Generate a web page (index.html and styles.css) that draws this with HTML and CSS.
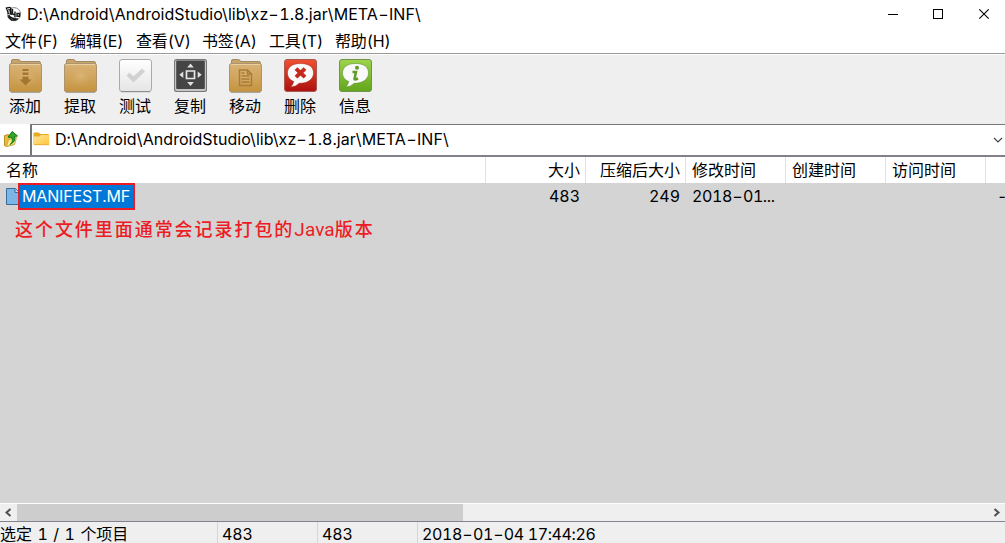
FILE: index.html
```html
<!DOCTYPE html>
<html lang="zh-CN">
<head>
<meta charset="utf-8">
<title>META-INF</title>
<link rel="stylesheet" href="styles.css">
</head>
<body>
<div class="window">
  <header class="titlebar">
    <svg class="app-icon" width="17" height="16" viewBox="0 0 17 16">
      <circle cx="9" cy="8.2" r="6.6" fill="#fff" stroke="#888" stroke-width="1"/>
      <path d="M.5 1.5 5 .8 6.5 2 7 9 3 8z" fill="#111"/>
      <path d="M2 3.2l3-.7M3.8 4l.6 3.6" fill="none" stroke="#fff"/>
      <path d="M7.5 3v5l2.5 1M10 5.5v6M12 11V7.5h2.5v2.8H12M3.5 9q3 4.5 9.5 4M3 10.5l3.5 3.5h5" fill="none" stroke="#1c1c1c" stroke-width="1.4"/>
    </svg>
    <span class="path title-path">D:\Android\AndroidStudio\lib\xz<i class="dash">-</i>1.8.jar\META<i class="dash">-</i>INF\</span>
    <svg class="controls" width="104" height="12" viewBox="0 0 104 12" fill="none" stroke="#000">
      <path d="M0 6.5h10M45.5 1.5h9v9h-9z" shape-rendering="crispEdges"/>
      <path d="M91.3 1.3l9.4 9.4M100.7 1.3l-9.4 9.4" stroke-width="1.1"/>
    </svg>
  </header>
  <nav class="menubar">
    <span class="m-file">文件(F)</span><span class="m-edit">编辑(E)</span><span class="m-view">查看(V)</span><span class="m-book">书签(A)</span><span class="m-tool">工具(T)</span><span class="m-help">帮助(H)</span>
  </nav>
  <svg width="0" height="0" class="defs">
    <defs>
      <linearGradient id="fold" x2="0" y2="1"><stop stop-color="#d9b378"/><stop offset="1" stop-color="#c4933e"/></linearGradient>
      <radialGradient id="glow"><stop stop-color="#dfb980" stop-opacity=".7"/><stop offset="1" stop-color="#d2a35a" stop-opacity="0"/></radialGradient>
      <linearGradient id="paper" x2="0" y2="1"><stop stop-color="#fff"/><stop offset="1" stop-color="#e5e5e5"/></linearGradient>
      <linearGradient id="red" x2="0" y2="1"><stop stop-color="#f05031"/><stop offset="1" stop-color="#ad1010"/></linearGradient>
      <linearGradient id="green" x2="0" y2="1"><stop stop-color="#9dd44b"/><stop offset="1" stop-color="#62a51c"/></linearGradient>
      <linearGradient id="yellow" x2="1" y2="1"><stop stop-color="#ffe599"/><stop offset="1" stop-color="#ffc73b"/></linearGradient>
      <g id="folder">
        <path d="M3.5 5V3q0-1.500 1.500-1.500h5.500q1.500 0 2 2H31q1.500 0 1.500 1.500v3h-29z" fill="#c9a468" stroke="#a08a68"/>
        <rect x="1.500" y="5.500" width="32" height="28.500" rx="2" fill="url(#fold)" stroke="#ad9470"/>
        <path d="M3 6.500h29" stroke="#e9cfa0"/>
        <ellipse cx="17.500" cy="18" rx="15" ry="12" fill="url(#glow)"/>
        <path d="M3 34.500h29" stroke="#999" stroke-opacity=".7"/>
      </g>
    </defs>
  </svg>
  <section class="toolbar">
    <div class="tool"><svg width="35" height="36" viewBox="0 0 35 36"><use href="#folder"/><path d="M14.500 11h6v2h-6zM14.500 14.500h6v2.500h-6zM14.500 18.500h6v3h3l-6 6-6-6h3z" fill="#a47731"/></svg><span>添加</span></div>
    <div class="tool"><svg width="35" height="36" viewBox="0 0 35 36"><use href="#folder"/></svg><span>提取</span></div>
    <div class="tool"><svg width="35" height="36" viewBox="0 0 35 36"><rect x="1.500" y="1.500" width="32" height="32" rx="2.500" fill="url(#paper)" stroke="#aaa"/><path d="M3 33.700h29" stroke="#888"/><path d="M8.500 17.500l3-3 4 4 8.500-8 3 3-11.500 11z" fill="#d1d1d1"/></svg><span>测试</span></div>
    <div class="tool"><svg width="35" height="36" viewBox="0 0 35 36"><rect x="1" y="1" width="33" height="33" rx="2.500" fill="#777"/><rect x="2" y="2" width="31" height="31" rx="2" fill="#c6c6c6"/><rect x="3.200" y="2.500" width="28.600" height="28.500" rx="1" fill="#454545"/><path d="M13.500 13h8v7.500h-8z" fill="none" stroke="#e7e7e7" stroke-width="1.700"/><path d="M14.200 9.500l3.300-4 3.300 4zM14.200 24l3.300 4 3.300-4zM10.300 13.500V20l-4-3.200zM24.700 13.500V20l4-3.200z" fill="#e1e1e1"/></svg><span>复制</span></div>
    <div class="tool"><svg width="35" height="36" viewBox="0 0 35 36"><use href="#folder"/><path d="M11.500 12h8l4 4v11.500h-12zM19.500 12v4h4M13.500 18h8M13.500 21h8M13.500 24h8M13.500 15h3" fill="none" stroke="#a77c36" stroke-width="1.500"/></svg><span>移动</span></div>
    <div class="tool"><svg width="35" height="36" viewBox="0 0 35 36"><rect x="1.500" y="1.500" width="32" height="32" rx="2.500" fill="url(#red)" stroke="#a85a51"/><path d="M17.500 5.500C9 5.500 4.500 9.500 4.500 15c0 4 2.500 7 6.300 8.500Q10 27 7.500 29q5.500-.3 8.500-3.700C25 25.500 30.500 21 30.500 15S26 5.500 17.500 5.500z" fill="#fafafa" stroke="#9b2019" stroke-opacity=".45"/><path d="M13 10.600l9 8.500M22 10.600l-9 8.500" stroke="#c5281d" stroke-width="4"/></svg><span>删除</span></div>
    <div class="tool"><svg width="35" height="36" viewBox="0 0 35 36"><rect x="1.500" y="1.500" width="32" height="32" rx="2.500" fill="url(#green)" stroke="#71934b"/><path d="M17.500 5.500C9 5.500 4.500 9.500 4.500 15c0 4 2.500 7 6.300 8.500Q10 27 7.500 29q5.500-.3 8.500-3.700C25 25.500 30.500 21 30.500 15S26 5.500 17.500 5.500z" fill="#fafafa" stroke="#477a18" stroke-opacity=".45"/><circle cx="19" cy="9.700" r="2" fill="#5e9c25"/><path d="M14.500 14H18l-1.500 7q0 1 3.500-.5" fill="none" stroke="#5e9c25" stroke-width="2.500"/></svg><span>信息</span></div>
  </section>
  <section class="address">
    <div class="up"><svg width="16" height="18" viewBox="0 0 16 18"><path d="M1.500 5.500l4-1 1 1.500 5-1v9l-8 2.500-2-1z" fill="#eabc3c" stroke="#bd8e22"/><path d="M3.500 16.500l2-7 8-2-2 7z" fill="#ffeb8f" stroke="#d3a83a"/><path d="M7.200 14.500Q11 11 8.400 7.200H5L9.200 1.500l5.300 4.500-3 .4q1.500 5-4.300 8.100z" fill="#35a62c" stroke="#087b15"/></svg></div>
    <div class="field">
      <svg class="field-icon" width="17" height="14" viewBox="0 0 17 14"><path d="M.5 1.500q0-1 1-1h4L7.500 2H15q1 0 1 1v9.500H.5z" fill="#e9aa22"/><path d="M.5 4.500h5.800L8 3h8.200v9.500H1.500q-1 0-1-1z" fill="url(#yellow)"/><path d="M1 12.700h15" stroke="#e8ae2f"/></svg>
      <span class="path">D:\Android\AndroidStudio\lib\xz<i class="dash">-</i>1.8.jar\META<i class="dash">-</i>INF\</span>
      <svg class="chev" width="10" height="8" viewBox="0 0 10 8"><path d="M1 2l4 4 4-4" fill="none" stroke="#444" stroke-width="1.200"/></svg>
    </div>
  </section>
  <main class="files">
    <div class="row head"><span>名称</span><span class="num">大小</span><span class="num">压缩后大小</span><span>修改时间</span><span>创建时间</span><span>访问时间</span><span class="last"></span></div>
    <div class="row item">
      <span class="name"><svg width="13" height="18" viewBox="0 0 13 18"><path d="M.5.5h9l4 4v12H.5z" fill="#7bb6e7" stroke="#386c9b"/><path d="M9 .5v4h4" fill="#b9daf5" stroke="#386c9b"/></svg><b class="selected">MANIFEST.MF</b></span>
      <span class="num">483</span><span class="num">249</span><span class="date">2018<i class="dash">-</i>01...</span><span></span><span></span><span class="cut">-</span>
    </div>
    <p class="note">这个文件里面通常会记录打包的<span>Java</span>版本</p>
  </main>
  <div class="scrollbar">
    <svg width="17" height="17" viewBox="0 0 17 17"><path d="M10.500 5L6.500 8.500l4 3.500" fill="none" stroke="#505050" stroke-width="2"/></svg>
    <div class="thumb"></div>
    <svg class="right" width="17" height="17" viewBox="0 0 17 17"><path d="M6.500 5l4 3.500-4 3.500" fill="none" stroke="#505050" stroke-width="2"/></svg>
  </div>
  <footer class="status"><span class="count">选定 1 / 1 个项目</span><span>483</span><span>483</span><span class="stamp">2018<i class="dash">-</i>01<i class="dash">-</i>04 17:44:26</span></footer>
</div>
</body>
</html>
```
FILE: styles.css
```css
* { box-sizing: border-box; }
body { margin: 0; font: 16px/20px Inter, "Noto Sans CJK SC", sans-serif; font-variant-numeric: tabular-nums; color: #000; overflow: hidden; }
.window { width: 1005px; height: 543px; display: flex; flex-direction: column; background: #fff; overflow: hidden; white-space: nowrap; }
.window svg { flex: none; display: block; }
.window > .defs { position: absolute; }
.dash { display: inline-block; width: 11px; font-style: normal; text-align: center; letter-spacing: 0; transform: scaleX(1.4); }
.titlebar { height: 28px; flex: none; display: flex; align-items: center; padding-left: 5px; }
.path { letter-spacing: .05px; }
.title-path { margin-left: 5px; }
.controls { margin-left: auto; margin-right: 13px; }
.menubar { height: 26px; flex: none; padding: 3px 0 0 5px; display: flex; border-bottom: 1px solid #999; letter-spacing: -.15px; }
.m-file { width: 65px; } .m-edit { width: 66px; } .m-view { width: 66px; } .m-book { width: 67px; } .m-tool { width: 66px; }
.toolbar { height: 70px; flex: none; background: #efefef; display: flex; padding-left: 8px; border-top: 1px solid #fff; }
.tool { width: 55px; padding-top: 3px; display: flex; flex-direction: column; }
.tool span { margin: 2px 0 0 1px; }
.address { height: 33px; flex: none; display: flex; border-bottom: 2px solid #838087; background: #efefef; }
.up { width: 30px; padding: 6px 0 0 3px; background: #fff; }
.field { flex: 1; display: flex; align-items: center; background: #fff; border: solid #777; border-width: 1px 0 0 2px; padding: 0 0 2px 1px; }
.field .path { margin-left: 5px; }
.chev { margin: 1px 2px 0 auto; }
.files { height: 346px; flex: none; background: #d4d4d4; }
.row { display: grid; grid-template-columns: 486px 100px 100px 100px 100px 100px 19px; }
.row span { padding-left: 6px; }
.row .num { text-align: right; padding: 0 6px 0 0; }
.head { height: 26px; background: #fff; }
.head span { border-right: 1px solid #e1e1e1; padding-top: 3px; }
.head .num { padding: 3px 5px 0 0; }
.head .last { border: 0; }
.item { height: 27px; line-height: 26px; }
.item .date { letter-spacing: -.4px; }
.item .name { display: flex; align-items: center; }
.selected { width: 117px; height: 27px; margin-left: -1px; border: 2px solid #ed1c24; background: #0078d7; color: #fff; font-weight: 400; line-height: 23px; padding-left: 2px; letter-spacing: -.15px; }
.row .cut { padding-left: 11px; }
.note { margin: 7px 0 0 15px; color: #ed1c24; font: 500 18px/22px "Noto Sans CJK SC", sans-serif; letter-spacing: 1.95px; }
.note span { font: 400 19px/22px Roboto, sans-serif; letter-spacing: .1px; }
.scrollbar { height: 18px; flex: none; background: #efefef; display: flex; border-top: 1px solid #fff; }
.thumb { width: 446px; background: #cdcdcd; }
.right { margin-left: auto; }
.status { height: 22px; flex: none; background: #efefef; border-top: 1px solid #83838f; display: flex; line-height: 18px; }
.status span { width: 100px; padding: 3px 0 0 4px; border-left: 1px solid #d6d6d6; letter-spacing: -.1px; }
.status .count { width: 217px; padding-left: 0; border: 0; word-spacing: 1.4px; }
.status .stamp { flex: 1; letter-spacing: -.4px; }
```
